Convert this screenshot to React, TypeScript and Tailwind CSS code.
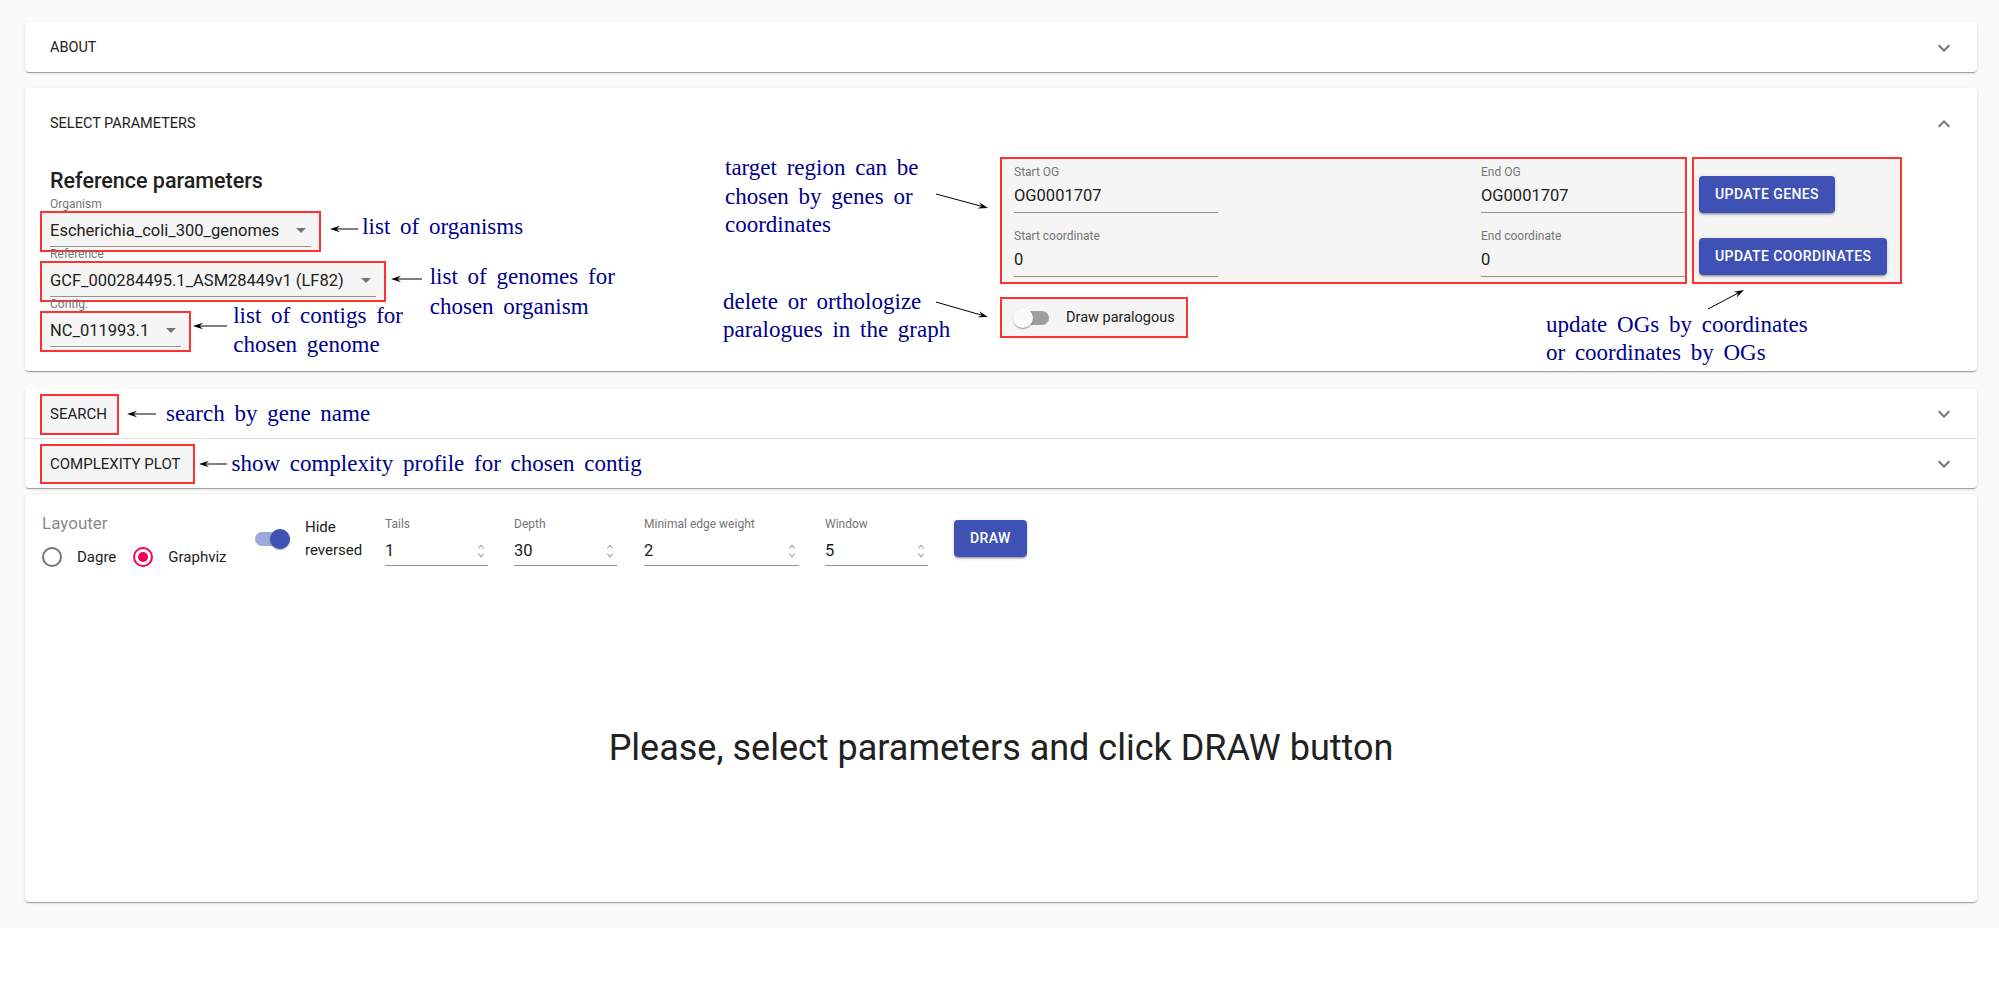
import React from "react";

// annotation text: serif, navy, a bit of word spacing like the LaTeX overlay
const note =
  "font-['Liberation_Serif','Times_New_Roman',serif] text-[23px] text-[#00008b] [word-spacing:4px] whitespace-nowrap";
const card =
  "bg-white rounded-[4px] shadow-[0_2px_1px_-1px_rgba(0,0,0,0.2),0_1px_1px_0_rgba(0,0,0,0.14),0_1px_3px_0_rgba(0,0,0,0.12)]";
const summary = "text-[14.5px] uppercase text-[#212121] whitespace-nowrap";
const redBox = "border-2 border-[#ff3030] bg-[#f5f5f5]";

function Chevron({ up = false }: { up?: boolean }) {
  return (
    <svg width="24" height="24" viewBox="0 0 24 24" className="shrink-0">
      <path
        fill="#757575"
        d={
          up
            ? "M12 8l-6 6 1.41 1.41L12 10.83l4.59 4.58L18 14z"
            : "M16.59 8.59L12 13.17 7.41 8.59 6 10l6 6 6-6z"
        }
      />
    </svg>
  );
}

interface ArrowProps {
  w: number;
  h: number;
  x1: number;
  y1: number;
  x2: number;
  y2: number;
  className?: string;
}

function Arrow({ w, h, x1, y1, x2, y2, className = "" }: ArrowProps) {
  const a = Math.atan2(y2 - y1, x2 - x1);
  const c = Math.cos(a);
  const s = Math.sin(a);
  const bx = x2 - 10 * c;
  const by = y2 - 10 * s;
  const nx = x2 - 6.5 * c;
  const ny = y2 - 6.5 * s;
  const pts = `${x2},${y2} ${bx - 3.2 * s},${by + 3.2 * c} ${nx},${ny} ${bx + 3.2 * s},${by - 3.2 * c}`;
  return (
    <svg width={w} height={h} className={"shrink-0 " + className}>
      <line x1={x1} y1={y1} x2={nx} y2={ny} stroke="#000" strokeWidth="1" />
      <polygon points={pts} fill="#000" />
    </svg>
  );
}

function SelectField({ value }: { value: string }) {
  return (
    <div className="flex items-center border-b border-[#949494] pt-[1px] pb-[6px]">
      <span className="text-[16.5px] leading-[19px] text-[#212121] whitespace-nowrap">{value}</span>
      <svg width="10" height="5" viewBox="0 0 10 5" className="ml-[17px] mr-[5px]">
        <path d="M0 0L5 5L10 0Z" fill="#757575" />
      </svg>
    </div>
  );
}

function TextField({ label, value, className = "" }: { label: string; value: string; className?: string }) {
  return (
    <div className={"w-[204px] " + className}>
      <div className="text-[12px] leading-[14px] text-[#757575]">{label}</div>
      <div className="mt-[7px] border-b border-[#949494] pb-[7px] text-[16.5px] leading-[19px] text-[#212121]">
        {value}
      </div>
    </div>
  );
}

function Spinner() {
  return (
    <svg width="8" height="18" viewBox="0 0 8 18" className="mr-[3px]">
      <path d="M1.5 6.5L4 3L6.5 6.5" fill="none" stroke="#8a8a8a" strokeWidth="1" />
      <path d="M1.5 11.5L4 15L6.5 11.5" fill="none" stroke="#8a8a8a" strokeWidth="1" />
    </svg>
  );
}

function NumField({ label, value, w }: { label: string; value: string; w: string }) {
  return (
    <div className={"mt-[4px] shrink-0 " + w}>
      <div className="text-[12px] leading-[14px] text-[#757575] whitespace-nowrap">{label}</div>
      <div className="mt-[10px] flex items-center justify-between border-b border-[#949494] pb-[5px]">
        <span className="text-[16.5px] leading-[19px] text-[#212121]">{value}</span>
        <Spinner />
      </div>
    </div>
  );
}

function Radio({ checked }: { checked: boolean }) {
  return (
    <svg width="20" height="20" viewBox="0 0 20 20" className="shrink-0">
      <circle cx="10" cy="10" r="9" fill="none" stroke={checked ? "#f50057" : "#757575"} strokeWidth="2" />
      {checked && <circle cx="10" cy="10" r="5" fill="#f50057" />}
    </svg>
  );
}

const blueBtn =
  "h-[37px] px-[16px] rounded-[4px] bg-[#3f51b5] text-white text-[14px] font-medium uppercase tracking-[0.4px] whitespace-nowrap shadow-[0_3px_1px_-2px_rgba(0,0,0,0.2),0_2px_2px_0_rgba(0,0,0,0.14),0_1px_5px_0_rgba(0,0,0,0.12)]";

export default function App() {
  return (
    <div className="min-h-[981px] bg-white font-['Roboto',sans-serif]">
      <div className="bg-[#fafafa] pl-[25px] pr-[22px] pt-[22px] pb-[26px]">
        {/* About */}
        <div className={card + " flex h-[50px] items-center justify-between pl-[25px] pr-[21px] pt-[2px]"}>
          <span className={summary}>About</span>
          <Chevron />
        </div>

        {/* Select parameters */}
        <div className={card + " mt-[16px]"}>
          <div className="flex h-[64px] items-center justify-between pl-[25px] pr-[21px] pt-[7px]">
            <span className={summary}>Select parameters</span>
            <Chevron up />
          </div>

          <div className="flex pl-[15px] pt-[5px] pb-[4px]">
            {/* reference parameters */}
            <div className="w-[683px] shrink-0 pt-[12px]">
              <h2 className="ml-[10px] text-[21.5px] leading-[24px] font-medium text-[#212121]">
                Reference parameters
              </h2>
              <div className="ml-[10px] mt-[4px] text-[12px] leading-[14px] text-[#757575]">Organism</div>
              <div className="flex h-[41px] items-start">
                <div className={redBox + " pl-[8px] pr-[8px] pt-[7px] pb-[3px]"}>
                  <SelectField value="Escherichia_coli_300_genomes" />
                </div>
                <Arrow w={28} h={10} x1={28} y1={5} x2={0} y2={5} className="ml-[9px] mt-[13px]" />
                <div className={note + " ml-[4px] mt-[1px] leading-[30px]"}>list of organisms</div>
              </div>

              <div className="ml-[10px] -mt-[5px] text-[12px] leading-[14px] text-[#757575]">Reference</div>
              <div className="flex h-[41px] items-start">
                <div className={redBox + " pl-[8px] pr-[8px] pt-[7px] pb-[3px]"}>
                  <SelectField value="GCF_000284495.1_ASM28449v1 (LF82)" />
                </div>
                <Arrow w={31} h={10} x1={31} y1={5} x2={0} y2={5} className="ml-[5px] mt-[13px]" />
                <div className={note + " ml-[8px] mt-[1px] leading-[30px]"}>
                  list of genomes for
                  <br />
                  chosen organism
                </div>
              </div>

              <div className="ml-[10px] -mt-[5px] text-[12px] leading-[14px] text-[#757575]">Contig:</div>
              <div className="flex h-[41px] items-start">
                <div className={redBox + " pl-[8px] pr-[8px] pt-[7px] pb-[3px]"}>
                  <SelectField value="NC_011993.1" />
                </div>
                <Arrow w={34} h={10} x1={34} y1={5} x2={0} y2={5} className="ml-[2px] mt-[10px]" />
                <div className={note + " ml-[6px] -mt-[10px] leading-[29px]"}>
                  list of contigs for
                  <br />
                  chosen genome
                </div>
              </div>
            </div>

            {/* notes for the target region */}
            <div className="w-[277px] shrink-0">
              <div className="-mt-[3px] flex">
                <div className={note + " w-[213px] leading-[28.5px] pl-[2px]"}>
                  target region can be
                  <br />
                  chosen by genes or
                  <br />
                  coordinates
                </div>
                <Arrow w={64} h={86} x1={0} y1={40} x2={52} y2={54} />
              </div>
              <div className="mt-[48px] flex">
                <div className={note + " w-[213px] leading-[28px]"}>
                  delete or orthologize
                  <br />
                  paralogues in the graph
                </div>
                <Arrow w={64} h={56} x1={0} y1={14} x2={52} y2={29} />
              </div>
            </div>

            {/* target region */}
            <div className="flex flex-col">
              <div className="flex gap-[5px]">
                <div className={redBox + " flex h-[127px] w-[687px] justify-between pl-[12px] pt-[6px]"}>
                  <div>
                    <TextField label="Start OG" value="OG0001707" />
                    <TextField label="Start coordinate" value="0" className="mt-[16px]" />
                  </div>
                  <div>
                    <TextField label="End OG" value="OG0001707" />
                    <TextField label="End coordinate" value="0" className="mt-[16px]" />
                  </div>
                </div>
                <div className={redBox + " flex h-[127px] w-[210px] flex-col items-start gap-[25px] pl-[5px] pt-[17px]"}>
                  <button className={blueBtn}>Update genes</button>
                  <button className={blueBtn}>Update coordinates</button>
                </div>
              </div>

              <div className="flex">
                <div className={redBox + " mt-[13px] flex h-[41px] w-[188px] items-center pl-[11px]"}>
                  <div className="relative h-[20px] w-[38px]">
                    <div className="absolute left-[2px] top-[3px] h-[14px] w-[34px] rounded-full bg-[#9e9e9e]" />
                    <div className="absolute left-0 top-0 h-[20px] w-[20px] rounded-full bg-[#fafafa] shadow-[0_2px_1px_-1px_rgba(0,0,0,0.2),0_1px_1px_0_rgba(0,0,0,0.14),0_1px_3px_0_rgba(0,0,0,0.12)]" />
                  </div>
                  <span className="ml-[15px] text-[14.5px] text-[#212121] whitespace-nowrap">Draw paralogous</span>
                </div>
                <div className="ml-[358px]">
                  <Arrow w={44} h={26} x1={4} y1={23} x2={40} y2={4} className="ml-[158px] mt-[2px]" />
                  <div className={note + " -mt-[1px] leading-[28px]"}>
                    update OGs by coordinates
                    <br />
                    or coordinates by OGs
                  </div>
                </div>
              </div>
            </div>
          </div>
        </div>

        {/* Search + complexity plot */}
        <div className={card + " mt-[18px]"}>
          <div className="flex h-[49px] items-center justify-between pl-[15px] pr-[21px] pt-[1px]">
            <div className="flex items-center">
              <div className={redBox + " flex h-[41px] items-center pl-[8px] pr-[10px]"}>
                <span className={summary + " text-[15px]"}>Search</span>
              </div>
              <Arrow w={29} h={10} x1={29} y1={5} x2={0} y2={5} className="ml-[8px]" />
              <span className={note + " ml-[10px]"}>search by gene name</span>
            </div>
            <Chevron />
          </div>
          <div className="flex h-[50px] items-center justify-between border-t border-[#e0e0e0] pl-[15px] pr-[21px] pt-[1px]">
            <div className="flex items-center">
              <div className={redBox + " flex h-[40px] items-center pl-[8px] pr-[13px]"}>
                <span className={summary + " text-[15px]"}>Complexity plot</span>
              </div>
              <Arrow w={28} h={10} x1={28} y1={5} x2={0} y2={5} className="ml-[4px]" />
              <span className={note + " ml-[4px]"}>show complexity profile for chosen contig</span>
            </div>
            <Chevron />
          </div>
        </div>

        {/* Graph */}
        <div className={card + " mt-[7px] pl-[17px] pt-[18px] pb-[133px]"}>
          <div className="flex items-start">
            <div className="w-[208px] shrink-0">
              <div className="text-[17px] leading-[20px] text-[#8a8a8a]">Layouter</div>
              <div className="mt-[13px] flex items-center">
                <Radio checked={false} />
                <span className="ml-[15px] text-[15px] text-[#212121]">Dagre</span>
                <span className="ml-[17px]">
                  <Radio checked />
                </span>
                <span className="ml-[15px] text-[15px] text-[#212121]">Graphviz</span>
              </div>
            </div>

            <div className="relative mt-[16px] h-[20px] w-[55px] shrink-0">
              <div className="absolute left-[5px] top-[3px] h-[14px] w-[35px] rounded-full bg-[#9fa8da]" />
              <div className="absolute left-[20px] top-0 h-[20px] w-[20px] rounded-full bg-[#3f51b5] shadow-[0_2px_1px_-1px_rgba(0,0,0,0.2),0_1px_1px_0_rgba(0,0,0,0.14),0_1px_3px_0_rgba(0,0,0,0.12)]" />
            </div>

            <div className="mt-[3px] w-[80px] shrink-0 text-[15px] leading-[23px] text-[#212121]">
              Hide
              <br />
              reversed
            </div>

            <NumField label="Tails" value="1" w="w-[103px]" />
            <div className="w-[26px] shrink-0" />
            <NumField label="Depth" value="30" w="w-[103px]" />
            <div className="w-[27px] shrink-0" />
            <NumField label="Minimal edge weight" value="2" w="w-[155px]" />
            <div className="w-[26px] shrink-0" />
            <NumField label="Window" value="5" w="w-[103px]" />

            <button className={blueBtn + " ml-[26px] mt-[7px]"}>Draw</button>
          </div>

          <div className="mt-[158px] pr-[17px] text-center text-[36px] leading-[42px] text-[#212121]">
            Please, select parameters and click DRAW button
          </div>
        </div>
      </div>
    </div>
  );
}
